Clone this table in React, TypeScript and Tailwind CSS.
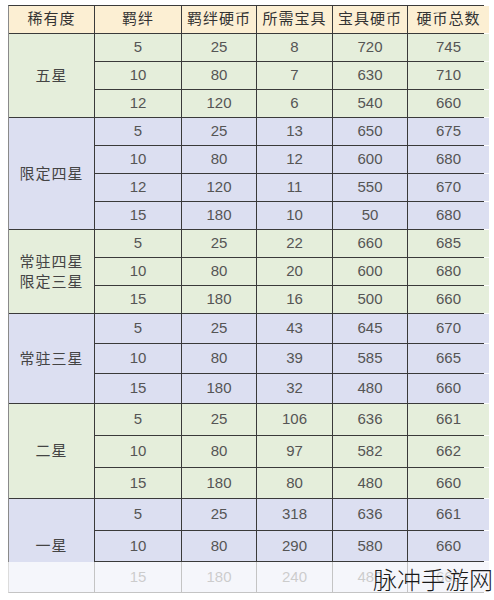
import React from "react";

type Group = { name: string[]; bg: string; rows: [string, string, string, string, string][]; heights: number[] };

const groups: Group[] = [
  { name: ["五星"], bg: "bg-[#e5eedb]", heights: [27, 27, 27], rows: [["5","25","8","720","745"],["10","80","7","630","710"],["12","120","6","540","660"]] },
  { name: ["限定四星"], bg: "bg-[#dcdff1]", heights: [27, 27, 27, 27], rows: [["5","25","13","650","675"],["10","80","12","600","680"],["12","120","11","550","670"],["15","180","10","50","680"]] },
  { name: ["常驻四星", "限定三星"], bg: "bg-[#e5eedb]", heights: [27, 27, 27], rows: [["5","25","22","660","685"],["10","80","20","600","680"],["15","180","16","500","660"]] },
  { name: ["常驻三星"], bg: "bg-[#dcdff1]", heights: [29, 29, 29], rows: [["5","25","43","645","670"],["10","80","39","585","665"],["15","180","32","480","660"]] },
  { name: ["二星"], bg: "bg-[#e5eedb]", heights: [31, 31, 30], rows: [["5","25","106","636","661"],["10","80","97","582","662"],["15","180","80","480","660"]] },
  { name: ["一星"], bg: "bg-[#dcdff1]", heights: [31, 30, 30], rows: [["5","25","318","636","661"],["10","80","290","580","660"],["15","180","240","480","660"]] },
];

const headers = ["稀有度", "羁绊", "羁绊硬币", "所需宝具", "宝具硬币", "硬币总数"];
const font = { fontFamily: '"Liberation Sans", "Noto Sans CJK SC", sans-serif' };

export default function App() {
  return (
    <div className="relative w-[494px] h-[600px] bg-white overflow-hidden pt-[5px] pl-[8px]" style={font}>
      <div className="grid grid-cols-[85px_86px_74px_75px_74px_81px] gap-px bg-[#3a3a3a] border border-[#3a3a3a] border-l-[#8a8a8a] w-[476px]">
        {headers.map((h) => (
          <div key={h} className="h-[27px] bg-[#fcefd3] flex items-center justify-center text-[15px] text-[#333] tracking-[1px]">
            {h}
          </div>
        ))}
        {groups.map((g, gi) => (
          <React.Fragment key={gi}>
            <div
              className={`${g.bg} flex flex-col items-center justify-center text-[15px] text-[#444] leading-[20px] tracking-[1px]`}
              style={{ gridRow: `span ${g.rows.length} / span ${g.rows.length}` }}
            >
              {g.name.map((n) => (
                <span key={n}>{n}</span>
              ))}
            </div>
            {g.rows.map((r, ri) =>
              r.map((c, ci) => (
                <div
                  key={`${ri}-${ci}`}
                  className={`${g.bg} flex items-center justify-center text-[15px] text-[#555]`}
                  style={{ height: g.heights[ri] }}
                >
                  {c}
                </div>
              ))
            )}
          </React.Fragment>
        ))}
      </div>
      <div className="absolute inset-x-0 top-[562px] bottom-0 bg-white/70" />
      <div className="absolute inset-x-0 top-[593px] bottom-0 bg-white" />
      <div
        className="absolute right-[1px] bottom-[5px] text-[24px] leading-[32px] text-[#1a1a1a] font-light"
        style={{ fontFamily: '"Noto Sans CJK SC", sans-serif' }}
      >
        脉冲手游网
      </div>
    </div>
  );
}
